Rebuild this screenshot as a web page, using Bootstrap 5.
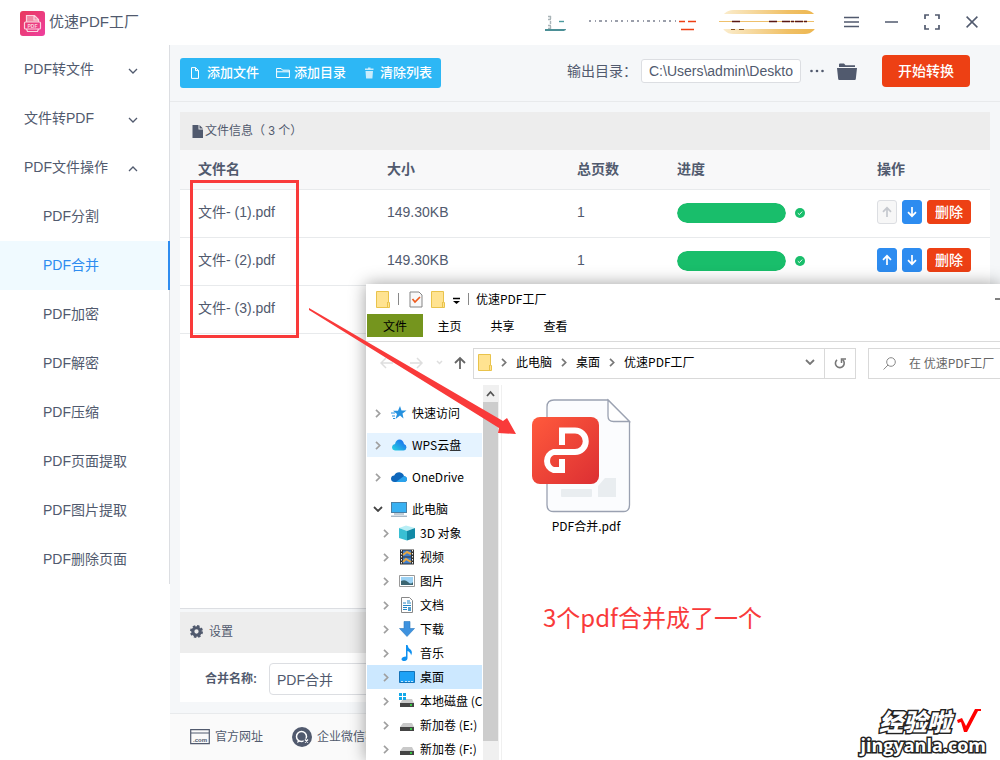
<!DOCTYPE html>
<html lang="zh-CN">
<head>
<meta charset="utf-8">
<meta name="viewport" content="width=device-width, initial-scale=1">
<title>优速PDF工厂</title>
<link href="https://cdn.jsdelivr.net/npm/bootstrap@5.3.0/dist/css/bootstrap.min.css" rel="stylesheet">
<style>
:root{--ink:#515a6e;--line:#e8eaec;--blue:#2d8cf0;--red:#ed4014}
body{font-family:"Liberation Sans","Noto Sans CJK SC",sans-serif;font-size:14px;line-height:20px;color:var(--ink);background:#fff}
svg{display:block;flex:none}
a{color:inherit;text-decoration:none}
.shell{min-height:100vh;overflow:hidden}
.titlebar{height:45px;padding:0 22px 2px 20px}
.brand{font-size:15px;gap:4px}
.brand svg{margin-top:4px}
.winbtns{gap:26px}
.winbtn{border:0;background:none;padding:0;color:var(--ink)}
.side{width:170px;flex:none}
.side ul{border-right:1px solid #dcdee2}
.side a{height:49px;padding:0 31px 2px 24px}
.side a.sub{padding-left:43px}
.side a.on{background:#f0faff;color:var(--blue);border-right:2px solid var(--blue);margin-right:-1px}
.work{background:#f5f7f9;min-width:0}
.tools{height:57px;padding:0 30px 4px 10px;border-bottom:1px solid var(--line)}
.addbar{background:#2db7f5;border-radius:3px;height:30px;margin-top:4px;padding:0 9px 0 10px;gap:17px}
.addbar button{border:0;background:none;padding:0;color:#fff;font-size:13px;font-weight:500;gap:4px}
.field{border:1px solid #dcdee2;border-radius:4px;background:#fff;color:var(--ink);padding:0 7px;min-width:0}
.outpath{width:160px;height:24px;border-radius:3px}
.start{background:var(--red);color:#fff;border:0;border-radius:4px;width:88px;height:32px;padding:0;margin-left:25px;font-size:14px;font-weight:500}
.start:hover{background:#c9330d;color:#fff}
.sheet{margin:10px 10px 3px;background:#fff;border-bottom:1px solid #dcdee2}
.bar{background:#ededed;font-size:12px;padding:0 12px}
.bar.info{height:38px}
.bar.conf{height:41px;padding:0 10px 2px;gap:6px}
.files{table-layout:fixed;color:var(--ink);margin:0}
.files th,.files td{padding:0 0 0 17px;border-bottom:1px solid var(--line);vertical-align:middle;color:var(--ink)}
.files th:first-child,.files td:first-child{padding-left:18px}
.files th{height:39px;background:#f8f8f9;font-weight:600}
.files td{height:48px;padding-bottom:2px}
.files tr>*:nth-child(n+2){padding-left:17px}
.w-a{width:190px}.w-b{width:100px}.w-c{width:200px}
.done{gap:9px;padding-top:2px}
.files .progress{width:109px;height:20px;border-radius:10px;background:#f3f3f3}
.files .progress-bar{background:#19be6b;border-radius:10px}
.acts{gap:5px}
.mini{width:20px;height:24px;border:1px solid var(--blue);background:var(--blue);color:#fff;border-radius:3px;padding:0}
.mini:disabled{background:#f7f7f7;border-color:#dcdee2;color:#c5c8ce}
.del{width:44px;background:var(--red);border-color:var(--red);font-weight:500}
.confsec{margin:0 10px}
.confbody{background:#fff;padding:10px 10px 7px 25px;margin-bottom:11px;gap:12px}
.confbody label{font-size:12px;font-weight:600}
.confbody .field{height:32px;width:240px}
.foot{height:47px;background:#fafafa;border-top:1px solid var(--line);padding:0 20px;font-size:12px;gap:29px}
.foot a{gap:5px}
.marker{left:190px;top:180px;width:109px;height:158px;border:3px solid #f93a3a}
.pointer{left:309px;top:308px}
/* file manager window lying over the application */
.explorer{left:366px;top:284px;right:0;bottom:0;background:#fff;color:#000;font:12px/20px "Noto Sans CJK SC",sans-serif;box-shadow:0 0 16px rgba(0,0,0,.38);overflow:hidden;white-space:nowrap}
.extitle{height:30px;padding-left:10px}
.tabs{height:28px;border-bottom:1px solid #dadada;padding-left:1px;padding-bottom:4px}
.tabs a{width:53px}
.tabs a.on{width:56px;background:#75951e;align-self:stretch}
.addr{height:43px;padding:5px 0 6px 14px}
.addr .box{height:31px;border:1px solid #d9d9d9;flex:none}
.crumbs{width:352px;padding:0 9px 2px 4px;gap:9px}
.crumbs svg{color:#777}
.reload{width:31px}
.search{width:240px;margin-left:12px;padding-left:14px;gap:13px;color:#666}
.tree{width:117px;padding:16px 1px 0;overflow:hidden;flex:none}
.tree a{height:24px;padding-left:6px;flex:none}
.tree .top{margin-bottom:8px}
.tree .deep{padding-left:14px}
.tree a svg:first-child{color:#a0a0a0}
.tree a svg+svg{margin:0 5px 0 8px}
.tree .hov{background:#e5f3ff}.tree .sel{background:#cce8ff}
.scroller{width:16px;background:#f0f0f0;margin-right:2px;flex:none}
.thumb{width:15px;background:#cdcdcd;height:339px}
.pane{border-left:1px solid #f0f0f0;padding:13px 0 0 29px}
.doc{width:110px}
.note{font-size:24px;line-height:36px;color:#f93a3a;margin:63px 0 0 12px}
.stamp{right:14px;bottom:6px;color:#fff;font-family:"Noto Sans CJK SC",sans-serif;-webkit-text-stroke:3px #222;paint-order:stroke fill}
.stamp .han{font-size:24px;line-height:30px;font-style:italic;font-weight:900;gap:5px}
.stamp .lat{font-family:"Open Sans",sans-serif;font-size:18px;line-height:18px;font-weight:700}
</style>
</head>
<body>
<svg width="0" height="0" class="position-absolute" aria-hidden="true">
<defs>
<linearGradient id="gold"><stop offset="0" stop-color="#fbeed0"/><stop offset=".7" stop-color="#f0c065"/><stop offset="1" stop-color="#edb650"/></linearGradient>
<linearGradient id="pink" x1="0" y1="0" x2="1" y2="1"><stop offset="0" stop-color="#e83a5c"/><stop offset="1" stop-color="#ee3f9f"/></linearGradient>
<linearGradient id="rd" x1="0" y1="0" x2="1" y2="1"><stop offset="0" stop-color="#ff5a3c"/><stop offset="1" stop-color="#dc2f33"/></linearGradient>
<linearGradient id="cy" x1="0" y1="1" x2="1" y2="0"><stop offset="0" stop-color="#27d6e0"/><stop offset="1" stop-color="#1a5ff0"/></linearGradient>
<symbol id="dn" viewBox="0 0 10 6"><path d="M1 1l4 4 4-4" fill="none" stroke="currentColor" stroke-width="1.3"/></symbol>
<symbol id="rt" viewBox="0 0 6 9"><path d="M1 .8l3.7 3.7L1 8.2" fill="none" stroke="currentColor" stroke-width="1.7"/></symbol>
<symbol id="up" viewBox="0 0 10 12"><path d="M5 11V2M1 5.8L5 1.800l4 4" fill="none" stroke="currentColor" stroke-width="1.700"/></symbol>
<symbol id="down" viewBox="0 0 10 12"><path d="M5 1v9M1 6.200l4 4 4-4" fill="none" stroke="currentColor" stroke-width="1.700"/></symbol>
<symbol id="fold" viewBox="0 0 14 17"><path d="M.5.5h12v11h1v5H.5z" fill="#ffe391" stroke="#e9c34b"/><path d="M11.500 11v5" stroke="#e9c34b"/></symbol>
<symbol id="disk" viewBox="0 0 16 16"><path d="M4 6h9l2 4H1z" fill="#c9c9c9"/><path d="M1 10h14v4H1z" fill="#444"/><path d="M11 12h2" stroke="#3e4" stroke-width="1.400"/></symbol>
<symbol id="ok" viewBox="0 0 10 10"><circle cx="5" cy="5" r="5" fill="#19be6b"/><path d="M2.800 5.200l1.600 1.400 2.800-3" fill="none" stroke="#fff" stroke-width=".9"/></symbol>
</defs>
</svg>

<div class="shell d-flex flex-column position-relative">
<header class="titlebar d-flex align-items-center">
  <div class="brand d-flex align-items-center">
    <svg width="25" height="25" viewBox="0 0 25 25"><rect width="25" height="25" rx="3" fill="url(#pink)"/><path d="M6.500 11V4.500h8l4 4V11" fill="#f08aa5"/><g fill="none" stroke="#fbd3df" stroke-width="1.200"><path d="M6.500 11V4.500h8l4 4V11M14 5v4h4"/><rect x="4.500" y="11" width="16" height="7" rx="1"/><path d="M6.500 18l1 2.500h10l1-2.500"/></g><text x="12.500" y="17" font-size="5" font-weight="700" text-anchor="middle" fill="#fbd3df">PDF</text></svg>
    <span>优速PDF工厂</span>
  </div>
  <div class="winbtns d-flex align-items-center ms-auto">
    <svg width="274" height="26" viewBox="545 10 274 26"><g stroke="#a9b4b8" stroke-width="1.400"><path d="M549 17.500h4M549 20.500h4M549 26.500h4M549 29.500h4M551.500 17v13" stroke-dasharray="3 2"/><path d="M560 22.500h5" stroke="#4b9a9e"/></g><path d="M546 30h21q0 2-4 2h-17z" fill="#4b8f96"/><path d="M590 22h87" stroke="#7b8090" stroke-width="1.500" stroke-dasharray="2 4 1 3 3 3"/><path d="M680 22.500h6M689 22.500h8M682 30.500h13" stroke="#ed4014" stroke-width="1.400"/><rect x="722" y="11" width="96" height="24" rx="12" fill="url(#gold)"/><path d="M720 15h99v15h-99z" fill="#fff"/><path d="M720 22.500h95" stroke="#eec06c"/><path d="M733 22.500h8M770 22.500h8M783 22.500h26" stroke="#5a1712" stroke-width="1.300" stroke-dasharray="8 1 3 1"/><path d="M732 30.500h4M740 30.500h5" stroke="#8a5624"/></svg>
    <button class="winbtn" aria-label="菜单"><svg width="15" height="12" viewBox="0 0 15 12"><path d="M0 1.500h15M0 6h15M0 10.500h15" stroke="currentColor" stroke-width="1.500"/></svg></button>
    <button class="winbtn" aria-label="最小化"><svg width="13" height="12"><path d="M0 6h13" stroke="currentColor" stroke-width="1.500"/></svg></button>
    <button class="winbtn" aria-label="全屏"><svg width="16" height="16" viewBox="0 0 16 16"><path d="M1 5V1h4M11 1h4v4M15 11v4h-4M5 15H1v-4" fill="none" stroke="currentColor" stroke-width="1.700"/></svg></button>
    <button class="winbtn" aria-label="关闭"><svg width="12" height="12" viewBox="0 0 12 12"><path d="M.6.6l10.800 10.800M11.400.6L.6 11.400" stroke="currentColor" stroke-width="1.500"/></svg></button>
  </div>
</header>

<div class="d-flex flex-grow-1">
<nav class="side" aria-label="功能">
  <ul class="list-unstyled m-0">
    <li><a href="#" class="d-flex align-items-center justify-content-between">PDF转文件<svg width="10" height="6" class="mt-1"><use href="#dn"/></svg></a></li>
    <li><a href="#" class="d-flex align-items-center justify-content-between">文件转PDF<svg width="10" height="6" class="mt-1"><use href="#dn"/></svg></a></li>
    <li><a href="#" class="d-flex align-items-center justify-content-between">PDF文件操作<svg width="10" height="6" viewBox="0 0 10 6" class="mt-1"><path d="M1 5l4-4 4 4" fill="none" stroke="currentColor" stroke-width="1.300"/></svg></a></li>
    <li><a href="#" class="sub d-flex align-items-center">PDF分割</a></li>
    <li><a href="#" class="sub on d-flex align-items-center">PDF合并</a></li>
    <li><a href="#" class="sub d-flex align-items-center">PDF加密</a></li>
    <li><a href="#" class="sub d-flex align-items-center">PDF解密</a></li>
    <li><a href="#" class="sub d-flex align-items-center">PDF压缩</a></li>
    <li><a href="#" class="sub d-flex align-items-center">PDF页面提取</a></li>
    <li><a href="#" class="sub d-flex align-items-center">PDF图片提取</a></li>
    <li><a href="#" class="sub d-flex align-items-center">PDF删除页面</a></li>
  </ul>
</nav>

<main class="work d-flex flex-column flex-grow-1">
  <div class="tools d-flex align-items-center">
    <div class="addbar d-flex align-items-center">
      <button class="d-flex align-items-center"><svg width="13" height="12" viewBox="0 0 13 12"><path d="M1.500.6h4l3 3v7.800h-7zM5.500.6v3h3" fill="none" stroke="currentColor"/></svg>添加文件</button>
      <button class="d-flex align-items-center"><svg width="14" height="12" viewBox="0 0 14 12"><path d="M.6 10.500V1.500h4.500l1.500 1.700h6.800v7.300zM.6 4.800h12.800" fill="none" stroke="currentColor"/></svg>添加目录</button>
      <button class="d-flex align-items-center"><svg width="13" height="12" viewBox="0 0 13 12"><path d="M2 1.500h3V.5h2.500v1h3V3H2zM2.500 4h7.500l-.6 7.500H3.100z" fill="#c9ecfc"/></svg>清除列表</button>
    </div>
    <label for="out" class="ms-auto">输出目录：</label>
    <input id="out" class="field outpath ms-1" type="text" value="C:\Users\admin\Deskto">
    <button class="winbtn ms-2" aria-label="浏览"><svg width="16" height="4"><g fill="currentColor"><circle cx="2.500" cy="2" r="1.300"/><circle cx="8" cy="2" r="1.300"/><circle cx="13.500" cy="2" r="1.300"/></g></svg></button>
    <button class="winbtn ms-2 ps-1" aria-label="打开目录"><svg width="20" height="17" viewBox="0 0 20 17"><path d="M2 4V1.500Q2 .5 3 .5h4l1.500 1.700H18V4z" fill="#515a6e"/><path d="M0 5h20l-1.200 11q-.1 1-1 1H2.200q-.9 0-1-1z" fill="#515a6e"/></svg></button>
    <button class="start">开始转换</button>
  </div>

  <section class="sheet flex-grow-1">
    <div class="bar info d-flex align-items-center"><svg width="13" height="13" viewBox="0 0 13 13"><path d="M.5 0H6.500v4.500H11V13H.5zM7.500 0L11 3.500H7.500z" fill="#515a6e"/></svg><span>文件信息（ 3 个）</span></div>
    <table class="files table">
      <thead><tr><th class="w-a">文件名</th><th class="w-a">大小</th><th class="w-b">总页数</th><th class="w-c">进度</th><th>操作</th></tr></thead>
      <tbody>
        <tr><td>文件- (1).pdf</td><td>149.30KB</td><td>1</td>
          <td><div class="done d-flex align-items-center"><div class="progress"><div class="progress-bar w-100"></div></div><svg width="10" height="10"><use href="#ok"/></svg></div></td>
          <td><div class="acts d-flex"><button class="mini d-flex align-items-center justify-content-center" disabled aria-label="上移"><svg width="10" height="12"><use href="#up"/></svg></button><button class="mini d-flex align-items-center justify-content-center" aria-label="下移"><svg width="10" height="12"><use href="#down"/></svg></button><button class="mini del">删除</button></div></td></tr>
        <tr><td>文件- (2).pdf</td><td>149.30KB</td><td>1</td>
          <td><div class="done d-flex align-items-center"><div class="progress"><div class="progress-bar w-100"></div></div><svg width="10" height="10"><use href="#ok"/></svg></div></td>
          <td><div class="acts d-flex"><button class="mini d-flex align-items-center justify-content-center" aria-label="上移"><svg width="10" height="12"><use href="#up"/></svg></button><button class="mini d-flex align-items-center justify-content-center" aria-label="下移"><svg width="10" height="12"><use href="#down"/></svg></button><button class="mini del">删除</button></div></td></tr>
        <tr><td>文件- (3).pdf</td><td></td><td></td><td></td><td></td></tr>
      </tbody>
    </table>
  </section>

  <section class="confsec">
    <div class="bar conf d-flex align-items-center"><svg width="13" height="13" viewBox="0 0 14 14"><circle cx="7" cy="7" r="4" fill="none" stroke="#515a6e" stroke-width="3.400"/><circle cx="7" cy="7" r="6" fill="none" stroke="#515a6e" stroke-width="2" stroke-dasharray="2.700 2"/></svg><span>设置</span></div>
    <div class="confbody d-flex align-items-center"><label for="nm">合并名称:</label><input id="nm" class="field" type="text" value="PDF合并"></div>
  </section>

  <footer class="foot d-flex align-items-center">
    <a href="#" class="d-flex align-items-center"><svg width="20" height="16" viewBox="0 0 20 16"><path d="M.7.7h18.600v14H.7zM.7 4h18.600" fill="none" stroke="#515a6e" stroke-width="1.200"/><text x="3" y="12.500" font-size="6" font-weight="700" fill="#515a6e">.com</text></svg>官方网址</a>
    <a href="#" class="d-flex align-items-center"><svg width="20" height="20" viewBox="0 0 20 20"><circle cx="10" cy="10" r="10" fill="#515a6e"/><circle cx="9.500" cy="9.500" r="5" fill="none" stroke="#fff" stroke-width="1.500"/><path d="M6 13l-1 3 3-1.500" fill="#fff"/><circle cx="14" cy="14" r="2.500" fill="#515a6e"/><path d="M13 12.500l3 3M16 12.500l-3 3" stroke="#fff" stroke-width="1.200"/></svg>企业微信客服</a>
  </footer>
</main>
</div>

<div class="marker position-absolute" aria-hidden="true"></div>

<section class="explorer position-absolute d-flex flex-column" aria-label="优速PDF工厂 文件夹">
  <div class="extitle d-flex align-items-center flex-shrink-0">
    <svg width="14" height="17"><use href="#fold"/></svg>
    <svg width="19" height="14"><path d="M8.500 1v12" stroke="#888"/></svg>
    <svg width="14" height="17" viewBox="0 0 14 17"><path d="M1 1h9l3 3v12H1z" fill="#f8f8f8" stroke="#858585"/><path d="M3.500 8l2.500 3 5-5" fill="none" stroke="#ee5a1c" stroke-width="1.700"/></svg>
    <svg width="14" height="17" class="ms-2"><use href="#fold"/></svg>
    <svg width="17" height="8" viewBox="-7 0 17 8" class="mt-1"><path d="M1 1.500h7" stroke="#000" stroke-width="1.500"/><path d="M1 4h7L4.500 7z"/></svg>
    <svg width="14" height="14"><path d="M6.500 1v12" stroke="#888"/></svg>
    <span>优速PDF工厂</span>
    <svg width="5" height="2" class="ms-auto"><path d="M0 1h5" stroke="#000"/></svg>
  </div>
  <nav class="tabs d-flex align-items-center flex-shrink-0">
    <a href="#" class="on d-flex align-items-center justify-content-center">文件</a><a href="#" class="text-center">主页</a><a href="#" class="text-center">共享</a><a href="#" class="text-center">查看</a>
  </nav>
  <div class="addr d-flex align-items-center flex-shrink-0">
    <svg width="93" height="14" viewBox="0 0 93 14" fill="none" stroke-width="1.500"><path d="M13 7H1M6 2L1 7l5 5M30 7h12M37 2l5 5-5 5M57 5l2.500 2.500L62 5" stroke="#dedede"/><path d="M80 13V2M75 7l5-5 5 5" stroke="#666" stroke-width="1.800"/></svg>
    <div class="box crumbs d-flex align-items-center"><svg width="14" height="17"><use href="#fold"/></svg><svg width="6" height="9"><use href="#rt"/></svg><a href="#">此电脑</a><svg width="6" height="9"><use href="#rt"/></svg><a href="#">桌面</a><svg width="6" height="9"><use href="#rt"/></svg><a href="#">优速PDF工厂</a><svg width="10" height="6" viewBox="0 0 10 6" class="ms-auto"><path d="M1 1l4 4 4-4" fill="none" stroke="#777" stroke-width="1.800"/></svg></div>
    <button class="box reload bg-white border-start-0 d-flex align-items-center justify-content-center p-0" aria-label="刷新"><svg width="12" height="13" viewBox="0 0 12 13"><path d="M3 2.800a4.400 4.400 0 1 0 5.500-.1" fill="none" stroke="#777" stroke-width="1.600"/><path d="M7.500 6V2H12" fill="none" stroke="#777" stroke-width="1.500"/></svg></button>
    <div class="box search d-flex align-items-center"><svg width="13" height="13" viewBox="0 0 13 13"><circle cx="8" cy="5" r="4.300" fill="none" stroke="#888"/><path d="M5 8L.6 12.500" stroke="#888"/></svg><span>在 优速PDF工厂</span></div>
  </div>
  <div class="d-flex flex-grow-1" style="min-height:0">
    <nav class="tree d-flex flex-column">
      <a href="#" class="top d-flex align-items-center"><svg width="10" height="9"><use href="#rt"/></svg><svg width="16" height="16" viewBox="0 0 16 16"><path d="M9 1l1.500 4.500h5l-4 3 1 5L9 10.500 4.500 14l1.500-5-4-3.200h5z" fill="#2591df"/><path d="M0 8h4M1 11h3M2 13.500h2" stroke="#2591df"/></svg>快速访问</a>
      <a href="#" class="top hov d-flex align-items-center"><svg width="10" height="9"><use href="#rt"/></svg><svg width="16" height="16" viewBox="0 0 16 16"><path d="M4 13.500Q1 13 1 10q.2-2.500 3-3Q5 2.500 8.500 2.500T13 7q2.500.8 2.500 3.500-.2 2.500-3 3z" fill="url(#cy)"/></svg>WPS云盘</a>
      <a href="#" class="top d-flex align-items-center"><svg width="10" height="9"><use href="#rt"/></svg><svg width="16" height="16" viewBox="0 0 16 16"><path d="M3.500 13Q0 12.800 0 9.500 .3 6.700 3.200 6.500 5 3 8.500 3.200 12 3.600 13 7q3 .7 3 3.200-.2 2.700-3 2.800z" fill="#0f67bb"/><path d="M5 13l8-6q3 .7 3 3.200-.2 2.700-3 2.800z" fill="#2aa3ec"/></svg>OneDrive</a>
      <a href="#" class="d-flex align-items-center"><svg width="10" height="6" viewBox="0 0 10 6"><path d="M1 1l4 4 4-4" fill="none" stroke="#444" stroke-width="1.800"/></svg><svg width="16" height="16" viewBox="0 0 16 16"><rect x=".5" y="1.500" width="15" height="10" fill="#38b1f2" stroke="#4b7fa3"/><path d="M3 13h10M0 15.200h16" stroke="#8299ad"/></svg>此电脑</a>
      <a href="#" class="deep d-flex align-items-center"><svg width="10" height="9"><use href="#rt"/></svg><svg width="16" height="16" viewBox="0 0 16 16"><path d="M0 3l7-2.500L16 3 8 6z" fill="#b8eef5"/><path d="M0 3l8 3v9.500L0 13z" fill="#39bfd3"/><path d="M16 3L8 6v9.500l8-2.500z" fill="#128aa6"/></svg>3D 对象</a>
      <a href="#" class="deep d-flex align-items-center"><svg width="10" height="9"><use href="#rt"/></svg><svg width="16" height="16" viewBox="0 0 16 16"><path d="M1 .5h14v15H1z" fill="#333"/><path d="M4 1.500h8v6H4zM4 8.500h8v6H4z" fill="#3f7fd0"/><path d="M4 6l4-3 4 2M4 13l3-3 5 3" stroke="#e5a845" stroke-width="2" fill="none"/><path d="M2.500 1v15M13.500 1v15" stroke="#eee" stroke-dasharray="1.500 1.500"/></svg>视频</a>
      <a href="#" class="deep d-flex align-items-center"><svg width="10" height="9"><use href="#rt"/></svg><svg width="16" height="16" viewBox="0 0 16 16"><path d="M.5 2.500h15v11H.5z" fill="#fff" stroke="#999"/><path d="M2 4h12v8H2z" fill="#9cd2f4"/><path d="M2 8q4-2 7 1t5 0v3H2z" fill="#3b6571"/></svg>图片</a>
      <a href="#" class="deep d-flex align-items-center"><svg width="10" height="9"><use href="#rt"/></svg><svg width="16" height="16" viewBox="0 0 16 16"><path d="M2.500.5h8l3 3v12h-11z" fill="#fff" stroke="#888"/><path d="M4 6h3M8 4h3M8 6h4M4 8.500h8M4 10.500h4M4 12.500h4" stroke="#2586c4"/><path d="M9 10h3v4H9z" fill="#53a0d0"/></svg>文档</a>
      <a href="#" class="deep d-flex align-items-center"><svg width="10" height="9"><use href="#rt"/></svg><svg width="16" height="16" viewBox="0 0 16 16"><path d="M5 .5h6v7h4.500L8 15.500.5 7.500H5z" fill="#3d92df" stroke="#2b78bd" stroke-width=".6"/></svg>下载</a>
      <a href="#" class="deep d-flex align-items-center"><svg width="10" height="9"><use href="#rt"/></svg><svg width="16" height="16" viewBox="0 0 16 16"><path d="M7 0h1.500q.5 3 3 4.500 2.500 2.500.5 6 0-3-3.500-4.500V13q0 2.500-3 3-3 0-3-2 .5-2.500 4.500-2.500z" fill="#1091f0"/></svg>音乐</a>
      <a href="#" class="deep sel d-flex align-items-center"><svg width="10" height="9"><use href="#rt"/></svg><svg width="16" height="16" viewBox="0 0 16 16"><path d="M.5 2.500h15v11H.5z" fill="#1ea2f6" stroke="#1473b8"/><path d="M2 12.500h2M6 12.500h8" stroke="#bfe5fb" stroke-dasharray="2 1"/></svg>桌面</a>
      <a href="#" class="deep d-flex align-items-center"><svg width="10" height="9"><use href="#rt"/></svg><svg width="16" height="16" viewBox="0 0 16 16"><use href="#disk"/><path d="M0 0h3v3H0zM4 0h3v3H4zM0 4h3v3H0zM4 4h3v3H4z" fill="#12a8e8"/></svg>本地磁盘 (C:)</a>
      <a href="#" class="deep d-flex align-items-center"><svg width="10" height="9"><use href="#rt"/></svg><svg width="16" height="16"><use href="#disk"/></svg>新加卷 (E:)</a>
      <a href="#" class="deep d-flex align-items-center"><svg width="10" height="9"><use href="#rt"/></svg><svg width="16" height="16"><use href="#disk"/></svg>新加卷 (F:)</a>
    </nav>
    <div class="scroller"><svg width="16" height="17" viewBox="0 0 16 17"><path d="M4 11l3.500-4 3.500 4" fill="none" stroke="#555" stroke-width="1.800"/></svg><div class="thumb"></div></div>
    <div class="pane flex-grow-1">
      <div class="doc d-flex flex-column align-items-center">
        <svg width="110" height="114" viewBox="531 398 110 114" overflow="visible"><path d="M554 400h54l21.500 21.500V505q0 6.500-6 6.500h-70q-6.500 0-6.500-6.500V407q0-7 7-7z" fill="#fbfcfe" stroke="#9aa1b1" stroke-width="1.300"/><path d="M608 400v16q0 5.500 5.500 5.500h16z" fill="#fff" stroke="#9aa1b1" stroke-width="1.300"/><rect x="561" y="489" width="31" height="8" rx="1" fill="#e9edf0"/><path d="M598 486l7-8h11v19h-18z" fill="#e9edf0"/><rect x="532" y="417" width="67" height="67" rx="8" fill="url(#rd)"/><path d="M562 445v-14.500h13a10.500 10.500 0 0 1 0 21.500h-21.500a9.500 9.500 0 0 0 0 18h8.500V459" fill="none" stroke="#fff" stroke-width="6"/></svg>
        <span class="mt-1">PDF合并.pdf</span>
      </div>
      <div class="note">3个pdf合并成了一个</div>
    </div>
  </div>
</section>

<svg class="pointer position-absolute" width="208" height="127" viewBox="309 308 208 127" aria-hidden="true"><path d="M309 308L503 421l4-3 9 16-18-1 1-5L309 310z" fill="#f93a3a"/></svg>

<div class="stamp position-absolute text-end">
  <div class="han d-flex justify-content-end align-items-center"><span>经验啦</span><svg width="30" height="26" viewBox="0 0 30 26"><path d="M1 12l5-2 4 8L19 1h6v2h-3L11 24H8L5 14l-3 1z" fill="#f00"/></svg></div>
  <div class="lat">jingyanla.com</div>
</div>
</div>
<script src="https://cdn.jsdelivr.net/npm/bootstrap@5.3.0/dist/js/bootstrap.bundle.min.js"></script>
</body>
</html>
